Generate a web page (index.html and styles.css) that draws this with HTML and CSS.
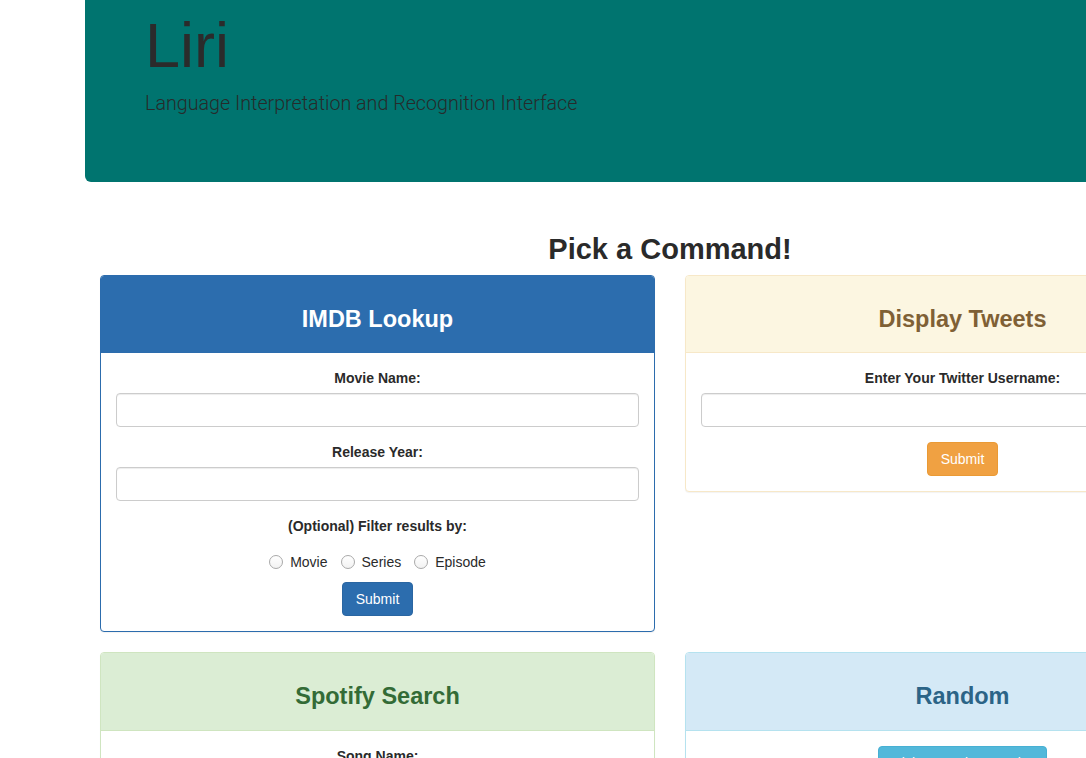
FILE: index.html
```html
<!DOCTYPE html>
<html lang="en">
<head>
<meta charset="utf-8">
<title>Liri</title>
<link rel="stylesheet" href="styles.css">
</head>
<body>
<div class="page">
  <header class="jumbotron">
    <h1 class="brand">Liri</h1>
    <p class="tagline">Language Interpretation and Recognition Interface</p>
  </header>

  <h2 class="section-title">Pick a Command!</h2>

  <div class="grid">
    <section class="panel panel-primary">
      <div class="panel-heading"><h3 class="panel-title">IMDB Lookup</h3></div>
      <div class="panel-body">
        <div class="form-group">
          <label class="field-label">Movie Name:</label>
          <input class="form-control" type="text">
        </div>
        <div class="form-group">
          <label class="field-label">Release Year:</label>
          <input class="form-control" type="text">
        </div>
        <div class="form-group tight">
          <label class="field-label">(Optional) Filter results by:</label>
        </div>
        <div class="radio-row">
          <label class="radio-item"><input type="radio" name="type" class="radio"><span>Movie</span></label>
          <label class="radio-item"><input type="radio" name="type" class="radio"><span>Series</span></label>
          <label class="radio-item"><input type="radio" name="type" class="radio"><span>Episode</span></label>
        </div>
        <div class="btn-row"><button class="btn btn-primary">Submit</button></div>
      </div>
    </section>

    <section class="panel panel-warning">
      <div class="panel-heading"><h3 class="panel-title">Display Tweets</h3></div>
      <div class="panel-body">
        <div class="form-group">
          <label class="field-label">Enter Your Twitter Username:</label>
          <input class="form-control" type="text">
        </div>
        <div class="btn-row"><button class="btn btn-warning">Submit</button></div>
      </div>
    </section>

    <section class="panel panel-success">
      <div class="panel-heading"><h3 class="panel-title">Spotify Search</h3></div>
      <div class="panel-body">
        <div class="form-group">
          <label class="field-label">Song Name:</label>
          <input class="form-control" type="text">
        </div>
        <div class="btn-row"><button class="btn btn-success">Submit</button></div>
      </div>
    </section>

    <section class="panel panel-info">
      <div class="panel-heading"><h3 class="panel-title">Random</h3></div>
      <div class="panel-body">
        <div class="btn-row"><button class="btn btn-info">Pick a Random Movie!</button></div>
      </div>
    </section>
  </div>
</div>
</body>
</html>
```
FILE: styles.css
```css
html, body {
  margin: 0;
  padding: 0;
  background: #ffffff;
  overflow: hidden;
}
body {
  font-family: "Liberation Sans", Arial, Helvetica, sans-serif;
  font-size: 14px;
  line-height: 20px;
  color: #333333;
}
.page {
  width: 1170px;
  margin-left: 85px;
}
.jumbotron {
  background: #00746f;
  border-radius: 0 0 6px 6px;
  padding: 11px 60px 48px;
  margin: 0;
}
.brand {
  margin: 0 0 9px;
  font-size: 63px;
  line-height: 69px;
  font-weight: 400;
  color: #2b2b2b;
}
.tagline {
  margin: 0 0 15px;
  font-family: Roboto, "Liberation Sans", sans-serif;
  font-weight: 300;
  font-size: 19.7px;
  line-height: 30px;
  color: #262b2b;
}
.section-title {
  margin: 51px 0 10px;
  text-align: center;
  font-size: 29px;
  line-height: 32px;
  font-weight: 700;
  color: #2a2a2a;
}
.grid {
  display: grid;
  grid-template-columns: 1fr 1fr;
  column-gap: 30px;
  row-gap: 20px;
  padding: 0 15px;
  align-items: start;
}
.panel {
  border: 1px solid #ddd;
  border-radius: 4px;
  background: #fff;
  box-shadow: 0 1px 1px rgba(0,0,0,.05);
}
.panel-heading {
  padding: 10px 15px;
  border-bottom: 1px solid transparent;
  border-radius: 3px 3px 0 0;
  text-align: center;
}
.panel-title {
  margin: 20px 0 10px;
  font-size: 23.5px;
  line-height: 26.4px;
  font-weight: 700;
}
.panel-body {
  padding: 15px;
}
.panel-primary { border-color: #2c6cad; }
.panel-primary .panel-heading { background: #2c6dae; border-color: #2c6cad; color: #fff; }
.panel-warning { border-color: #f7e8c8; }
.panel-warning .panel-heading { background: #fcf6e1; border-color: #f7e8c8; color: #7f6035; }
.panel-success { border-color: #cfe5c0; }
.panel-success .panel-heading { background: #dbedd4; border-color: #cfe5c0; color: #336b36; }
.panel-info { border-color: #b5e2ef; }
.panel-info .panel-heading { background: #d4e9f6; border-color: #b5e2ef; color: #2b6487; }

.form-group { margin-bottom: 15px; text-align: center; }
.form-group.tight { margin-bottom: 0; }
.field-label {
  display: block;
  font-weight: 700;
  margin-bottom: 5px;
  color: #2a2a2a;
}
.form-control {
  display: block;
  box-sizing: border-box;
  width: 100%;
  height: 34px;
  padding: 6px 12px;
  font: inherit;
  border: 1px solid #cccccc;
  border-radius: 4px;
  box-shadow: inset 0 1px 1px rgba(0,0,0,.075);
  background: #fff;
  margin: 0;
}
.radio-row {
  display: flex;
  justify-content: center;
  gap: 13px;
  margin: 16px 0 10px;
}
.radio-item {
  display: flex;
  align-items: center;
  gap: 7px;
  color: #2a2a2a;
}
.radio {
  appearance: none;
  -webkit-appearance: none;
  width: 14px;
  height: 14px;
  margin: 0;
  border: 1px solid #a9a9a9;
  border-radius: 50%;
  background: linear-gradient(#ffffff, #f2f2f2);
  box-sizing: border-box;
}
.btn-row { text-align: center; }
.btn {
  display: inline-block;
  padding: 6px 13px;
  font: inherit;
  line-height: 20px;
  border: 1px solid transparent;
  border-radius: 4px;
  color: #fff;
  cursor: pointer;
}
.btn-primary { background: #2c6dae; border-color: #2a66a2; }
.btn-warning { background: #f0a142; border-color: #ea9a35; }
.btn-success { background: #4fa64f; border-color: #479947; }
.btn-info { background: #52b8da; border-color: #47b0d3; }
```
